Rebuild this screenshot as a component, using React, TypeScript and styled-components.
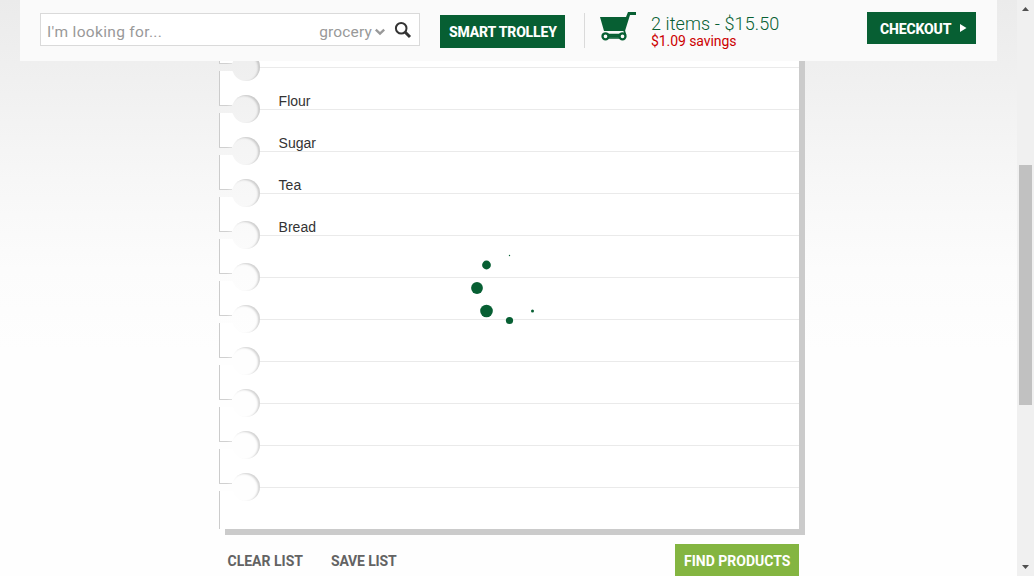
import React from 'react';
import styled, { createGlobalStyle } from 'styled-components';

const pageGradient = 'linear-gradient(to bottom, #ebebeb 0, #f0f0f0 80px, #f7f7f7 180px, #fcfcfc 270px, #fefefe 350px, #fefefe 100%)';

const GlobalStyle = createGlobalStyle`
  * { box-sizing: border-box; }
  body { margin: 0; overflow: hidden; font-family: Roboto, "Liberation Sans", sans-serif; background: #fefefe; }
  button { border: 0; padding: 0; background: none; font: inherit; cursor: pointer; }
`;

const Page = styled.div`
  height: 576px;
  width: 1034px;
  display: flex;
  background: ${pageGradient} fixed;
`;

const Main = styled.main`
  flex: 1;
  padding: 26px 218px 0 219px;
  overflow: hidden;
`;

const TopBar = styled.header`
  position: fixed;
  z-index: 2;
  top: 0;
  left: 20px;
  width: 977px;
  height: 61px;
  padding: 0 21px 0 20px;
  display: flex;
  align-items: flex-start;
  background: #fafafa;
`;

const SearchBox = styled.div`
  display: flex;
  align-items: center;
  width: 380px;
  height: 33px;
  margin-top: 13px;
  padding: 5px 7px 0 6px;
  border: 1px solid #dadada;
  background: #fff;
  color: #999;
`;

const Label = styled.span<{ $size: number; $spacing?: number; $weight?: number; $color?: string; $line?: number }>`
  display: block;
  white-space: nowrap;
  font-size: ${p => p.$size}px;
  letter-spacing: ${p => p.$spacing ?? 0}px;
  font-weight: ${p => p.$weight ?? 400};
  color: ${p => p.$color ?? 'inherit'};
  line-height: ${p => (p.$line ? `${p.$line}px` : 'normal')};
`;

const Category = styled.div`
  display: flex;
  align-items: center;
  margin-left: auto;
  margin-top: -1px;
  svg { margin-left: 3px; }
`;

const SearchIcon = styled.svg`
  margin: -5px 0 0 9px;
`;

const Button = styled.button<{ $width: number; $height: number; $color: string }>`
  display: flex;
  align-items: center;
  width: ${p => p.$width}px;
  height: ${p => p.$height}px;
  padding: 2px 0 0 9px;
  background: ${p => p.$color};
  color: #fff;
`;

const TrolleyButton = styled(Button)`
  margin: 15px 0 0 20px;
  padding-top: 1px;
`;

const CheckoutButton = styled(Button)`
  margin: 12px 0 0 auto;
  padding-left: 13px;
  svg { margin: -3px 0 0 9px; }
`;

const Cart = styled.div`
  display: flex;
  height: 35px;
  margin: 13px 0 0 19px;
  padding-left: 15px;
  border-left: 1px solid #dadada;
  svg { margin-top: -1px; flex: none; }
`;

const CartText = styled.div`
  margin-left: 14px;
`;

const Notepad = styled.section`
  height: 503px;
  border-left: 1px solid #ccc;
  background: #fff;
  box-shadow: 6px 6px 0 #cbcbcb;
`;

const Line = styled.div`
  position: relative;
  height: 42px;
  padding: 25px 0 0 58.6px;
  border-bottom: 1px solid #eaeaea;
  font: 14px/17px "Liberation Sans", Arial, sans-serif;
  color: #333;
`;

const Hole = styled.i`
  position: absolute;
  left: 12px;
  bottom: -14px;
  width: 28px;
  height: 28px;
  border-radius: 50%;
  background: ${pageGradient} fixed;
  box-shadow: inset -2px 1px 2px rgba(0, 0, 0, 0.17);
`;

const Slot = styled.i`
  position: absolute;
  left: -1px;
  bottom: -4px;
  width: 18px;
  height: 8px;
  background: ${pageGradient} fixed;
  &::before {
    content: '';
    display: block;
    width: 13px;
    height: 1px;
    background: linear-gradient(to right, #d0d0d0 60%, #e0e0e0);
  }
`;

const Actions = styled.div`
  display: flex;
  gap: 28px;
  padding: 15px 0 0 8.5px;
  color: #666;
  button:last-child { margin-left: auto; }
`;

const TextButton = styled.button`
  color: #636363;
  padding-top: 2px;
`;

const Spinner = styled.svg`
  position: fixed;
  left: 464px;
  top: 248px;
`;

const Scrollbar = styled.aside`
  width: 17px;
  display: flex;
  flex-direction: column;
  align-items: center;
  background: #f0f0f0;
`;

const Thumb = styled.div`
  width: 13px;
  height: 240px;
  margin: 148px 1px auto 0;
  background: #c1c1c1;
`;

const ScrollArrow = styled.svg`
  display: block;
  flex: none;
`;

const items = ['', 'Flour', 'Sugar', 'Tea', 'Bread', '', '', '', '', '', ''];

const dots = [
  { x: 509.5, y: 255.5, r: 0.7 },
  { x: 486.5, y: 265, r: 4.4 },
  { x: 477, y: 288, r: 5.9 },
  { x: 486.5, y: 311, r: 6.3 },
  { x: 509.5, y: 320.5, r: 3.6 },
  { x: 532.5, y: 311, r: 1.5 },
];

export default function App() {
  return (
    <Page>
      <GlobalStyle />
      <TopBar>
        <SearchBox>
          <Label $size={15.5} $spacing={0.33}>I'm looking for...</Label>
          <Category>
            <Label $size={15.5} $spacing={0.15}>grocery</Label>
            <svg width="10" height="8" viewBox="0 0 10 8"><path d="M0.8 1.6 5 5.6 9.2 1.6" fill="none" stroke="#999" strokeWidth="2.4" /></svg>
          </Category>
          <SearchIcon width="18" height="18" viewBox="0 0 18 18">
            <circle cx="7.2" cy="7.2" r="5.3" fill="none" stroke="#333" strokeWidth="2" />
            <path d="m11 11 5 5" stroke="#333" strokeWidth="3" />
          </SearchIcon>
        </SearchBox>
        <TrolleyButton $width={125} $height={33} $color="#075f33">
          <Label $size={14} $weight={800} $spacing={-0.17}>SMART TROLLEY</Label>
        </TrolleyButton>
        <Cart>
          <svg width="37" height="31" viewBox="0 0 37 31">
            <path d="M0 5h26l2-5h8v3h-6l-5 16H4z" fill="#075f33" />
            <path d="M6 22.6h17M6 26h17M24 18l1.5 5" stroke="#075f33" strokeWidth="1.7" />
            <circle cx="5.5" cy="24.3" r="3" fill="#fafafa" stroke="#075f33" strokeWidth="2.3" />
            <circle cx="22.5" cy="24.3" r="3" fill="#fafafa" stroke="#075f33" strokeWidth="2.3" />
            <path d="M9 24.3h10" stroke="#075f33" strokeWidth="2.5" />
          </svg>
          <CartText>
            <Label $size={18} $weight={300} $spacing={0.1} $color="#075f33" $line={21}>2 items - $15.50</Label>
            <Label $size={14} $color="#c00" $line={15} $spacing={-0.08}>$1.09 savings</Label>
          </CartText>
        </Cart>
        <CheckoutButton $width={109} $height={32} $color="#075f33">
          <Label $size={14} $weight={800} $spacing={-0.15}>CHECKOUT</Label>
          <svg width="7" height="8" viewBox="0 0 7 8"><path d="M0 0 6.5 4 0 8z" fill="#fff" /></svg>
        </CheckoutButton>
      </TopBar>
      <Main>
        <Notepad>
          {items.map((item, i) => (
            <Line key={i}>
              {item}
              <Hole />
              <Slot />
            </Line>
          ))}
        </Notepad>
        <Actions>
          <TextButton><Label $size={14} $weight={700}>CLEAR LIST</Label></TextButton>
          <TextButton><Label $size={14} $weight={700} $spacing={-0.15}>SAVE LIST</Label></TextButton>
          <Button $width={124} $height={32} $color="#84b541">
            <Label $size={14} $weight={700}>FIND PRODUCTS</Label>
          </Button>
        </Actions>
        <Spinner width="80" height="80" viewBox="464 248 80 80">
          {dots.map(d => <circle key={`${d.x}-${d.y}`} cx={d.x} cy={d.y} r={d.r} fill="#075f33" />)}
        </Spinner>
      </Main>
      <Scrollbar>
        <ScrollArrow width="17" height="17"><path d="M5 11 8.5 7 12 11z" fill="#505050" /></ScrollArrow>
        <Thumb />
        <ScrollArrow width="17" height="17"><path d="M5 6 8.5 10 12 6z" fill="#505050" /></ScrollArrow>
      </Scrollbar>
    </Page>
  );
}
